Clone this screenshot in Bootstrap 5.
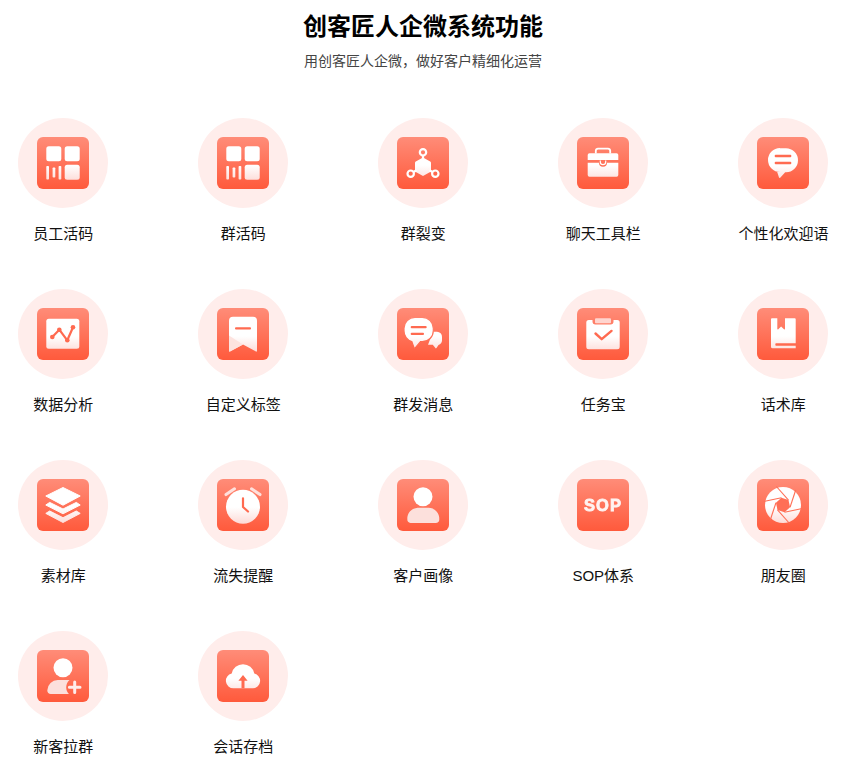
<!DOCTYPE html>
<html lang="zh-CN">
<head>
<meta charset="utf-8">
<title>创客匠人企微系统功能</title>
<link href="https://cdn.jsdelivr.net/npm/bootstrap@5.3.0/dist/css/bootstrap.min.css" rel="stylesheet">
<style>
body{font-family:"Liberation Sans","Noto Sans CJK SC",sans-serif;color:#000;background:#fff;overflow:hidden}
.page-head{padding:9px 0 0 1px}
.page-title{font-size:24px;line-height:36px;font-weight:700;margin:0 0 6px;color:#000}
.page-sub{font-size:14px;line-height:20px;color:#444;margin:0}
.feat-grid{padding:47px 0 0 18px;column-gap:90px;row-gap:45px}
.feat-item{width:90px}
.feat-disc{width:90px;height:90px;background:#ffedeb}
.feat-ico{width:52px;height:52px;filter:blur(.3px)}
.feat-label{font-size:15px;line-height:22px;margin-top:15px;margin-bottom:-1px;padding-left:.5px;white-space:nowrap;color:#111}
.defs-box{width:0;height:0}
.sop-mark{font-family:"Liberation Sans",sans-serif;font-weight:700;font-size:16.5px;letter-spacing:1px}
</style>
</head>
<body>
<svg class="d-block defs-box" aria-hidden="true">
<defs>
<linearGradient id="sq" gradientUnits="userSpaceOnUse" x1="0" y1="0" x2="0" y2="52"><stop offset="0" stop-color="#ff8c78"/><stop offset="1" stop-color="#ff5a3c"/></linearGradient>
<linearGradient id="wh" gradientUnits="userSpaceOnUse" x1="0" y1="9" x2="0" y2="44"><stop offset="0" stop-color="#fff"/><stop offset=".55" stop-color="#fff"/><stop offset="1" stop-color="#fddcd8"/></linearGradient>
</defs>
</svg>
<div class="page-head text-center">
<h1 class="page-title">创客匠人企微系统功能</h1>
<p class="page-sub">用创客匠人企微，做好客户精细化运营</p>
</div>
<div class="feat-grid d-flex flex-wrap">

<div class="feat-item text-center">
<div class="feat-disc rounded-circle d-flex align-items-center justify-content-center">
<svg class="feat-ico" viewBox="0 0 52 52"><rect width="52" height="52" rx="6" fill="url(#sq)"/><g fill="url(#wh)"><rect x="9.300" y="9.300" width="15" height="15" rx="2.500"/><rect x="27.700" y="9.300" width="15" height="15" rx="2.500"/><rect x="27.700" y="27.700" width="15" height="15" rx="2.500"/><rect x="9.300" y="29" width="2.700" height="13.500" rx=".8"/><rect x="15.600" y="30.500" width="2.700" height="10" rx=".8"/><rect x="21.600" y="29" width="2.700" height="13.500" rx=".8"/></g></svg>
</div>
<div class="feat-label">员工活码</div>
</div>

<div class="feat-item text-center">
<div class="feat-disc rounded-circle d-flex align-items-center justify-content-center">
<svg class="feat-ico" viewBox="0 0 52 52"><rect width="52" height="52" rx="6" fill="url(#sq)"/><g fill="url(#wh)"><rect x="9.300" y="9.300" width="15" height="15" rx="2.500"/><rect x="27.700" y="9.300" width="15" height="15" rx="2.500"/><rect x="27.700" y="27.700" width="15" height="15" rx="2.500"/><rect x="9.300" y="29" width="2.700" height="13.500" rx=".8"/><rect x="15.600" y="30.500" width="2.700" height="10" rx=".8"/><rect x="21.600" y="29" width="2.700" height="13.500" rx=".8"/></g></svg>
</div>
<div class="feat-label">群活码</div>
</div>

<div class="feat-item text-center">
<div class="feat-disc rounded-circle d-flex align-items-center justify-content-center">
<svg class="feat-ico" viewBox="0 0 52 52"><rect width="52" height="52" rx="6" fill="url(#sq)"/><path d="M26 20.500l7.200 4.100a1.600 1.600 0 0 1 .8 1.400v7.600a1.600 1.600 0 0 1-.8 1.400L26 39l-7.200-3.900a1.600 1.600 0 0 1-.8-1.400V26a1.600 1.600 0 0 1 .8-1.400z" fill="url(#wh)"/><g stroke="#fff" stroke-width="2.200" fill="none"><circle cx="26" cy="15.300" r="3.200"/><circle cx="13.700" cy="36.700" r="3.200"/><circle cx="38.300" cy="36.700" r="3.200"/><path d="M26 18.500v4M16.500 35l3-1.800M35.500 35l-3-1.800"/></g></svg>
</div>
<div class="feat-label">群裂变</div>
</div>

<div class="feat-item text-center">
<div class="feat-disc rounded-circle d-flex align-items-center justify-content-center">
<svg class="feat-ico" viewBox="0 0 52 52"><rect width="52" height="52" rx="6" fill="url(#sq)"/><path d="M18.800 16.500v-2.700a2.200 2.200 0 0 1 2.200-2.200h10a2.200 2.200 0 0 1 2.200 2.200v2.700" fill="none" stroke="#fff" stroke-width="1.800"/><path d="M12.500 16.300h27a1.800 1.800 0 0 1 1.800 1.800v5H10.700v-5a1.800 1.800 0 0 1 1.800-1.800z" fill="#fff"/><path d="M10.700 25.800H22a4 4 0 0 0 8 0h11.300v12.200a1.700 1.700 0 0 1-1.700 1.700H12.400a1.700 1.700 0 0 1-1.700-1.700z" fill="url(#wh)"/><path d="M23.300 23.500v1.500a2.700 2.700 0 0 0 5.400 0v-1.500" fill="none" stroke="#fff" stroke-width="1.200"/></svg>
</div>
<div class="feat-label">聊天工具栏</div>
</div>

<div class="feat-item text-center">
<div class="feat-disc rounded-circle d-flex align-items-center justify-content-center">
<svg class="feat-ico" viewBox="0 0 52 52"><rect width="52" height="52" rx="6" fill="url(#sq)"/><path d="M23 11.300h6a12 12 0 0 1 0 24h-.8l-5 5.400c-.4.400-1 .2-1.200-.3l-1.800-5.500H23a12 12 0 0 1 0-24z" fill="url(#wh)"/><g fill="#ff6a50"><rect x="17.700" y="17.700" width="16.600" height="2.600" rx="1"/><rect x="17.700" y="24.700" width="16.600" height="2.600" rx="1"/></g></svg>
</div>
<div class="feat-label">个性化欢迎语</div>
</div>

<div class="feat-item text-center">
<div class="feat-disc rounded-circle d-flex align-items-center justify-content-center">
<svg class="feat-ico" viewBox="0 0 52 52"><rect width="52" height="52" rx="6" fill="url(#sq)"/><rect x="9.300" y="10.700" width="33" height="30" rx="2.500" fill="url(#wh)"/><path d="M15.300 29l7-7.300 8 10.600L36 19.300" fill="none" stroke="#ff6a50" stroke-width="2.200" stroke-linejoin="round"/><g fill="#ff6a50"><circle cx="15.300" cy="29" r="2.300"/><circle cx="22.300" cy="21.700" r="2.300"/><circle cx="30.300" cy="32.300" r="2.300"/><circle cx="36" cy="19.300" r="2.300"/></g></svg>
</div>
<div class="feat-label">数据分析</div>
</div>

<div class="feat-item text-center">
<div class="feat-disc rounded-circle d-flex align-items-center justify-content-center">
<svg class="feat-ico" viewBox="0 0 52 52"><rect width="52" height="52" rx="6" fill="url(#sq)"/><path d="M16 8.700h20a4 4 0 0 1 4 4v30.300c0 .6-.5.800-1 .5L26 36.500l-13 7c-.5.300-1 0-1-.5V12.700a4 4 0 0 1 4-4z" fill="url(#wh)"/><path d="M12 27.500L26 36.500l-13 7c-.5.300-1 0-1-.5z" fill="#fde3df"/><rect x="18" y="19.300" width="16" height="2.200" rx="1" fill="#ff6a50"/></svg>
</div>
<div class="feat-label">自定义标签</div>
</div>

<div class="feat-item text-center">
<div class="feat-disc rounded-circle d-flex align-items-center justify-content-center">
<svg class="feat-ico" viewBox="0 0 52 52"><rect width="52" height="52" rx="6" fill="url(#sq)"/><path d="M36 23.700h4a5 5 0 0 1 5 5.300v3.500a5 5 0 0 1-3.500 4.500l-2 3-.7.4-3-3.600H31z" fill="url(#wh)"/><path d="M18 9.300h7.300a11 11 0 0 1 11 11v2.400a11 11 0 0 1-11 11H23.500l-5.300 6.200c-.4.400-1 .3-1.200-.2l-2.200-6.100A11 11 0 0 1 7 23v-2.700a11 11 0 0 1 11-11z" fill="url(#wh)" stroke="url(#sq)" stroke-width="1.200"/><g fill="#ff6a50"><rect x="13.700" y="18" width="16" height="2.300" rx="1"/><rect x="13.700" y="24.700" width="13.300" height="2.300" rx="1"/></g></svg>
</div>
<div class="feat-label">群发消息</div>
</div>

<div class="feat-item text-center">
<div class="feat-disc rounded-circle d-flex align-items-center justify-content-center">
<svg class="feat-ico" viewBox="0 0 52 52"><rect width="52" height="52" rx="6" fill="url(#sq)"/><path d="M11.800 12h3.700v1.500a3 3 0 0 0 3 3h15a3 3 0 0 0 3-3V12h3.700a2.500 2.500 0 0 1 2.500 2.500v24.300a2.500 2.500 0 0 1-2.500 2.500H11.800a2.500 2.500 0 0 1-2.500-2.500V14.500a2.500 2.500 0 0 1 2.500-2.500z" fill="url(#wh)"/><rect x="18" y="10.300" width="16" height="5" rx="1" fill="#ffd5cf"/><path d="M18.500 25.500l6.200 5.700 9.800-8.300" fill="none" stroke="#ff6a50" stroke-width="2.400" stroke-linecap="round" stroke-linejoin="round"/></svg>
</div>
<div class="feat-label">任务宝</div>
</div>

<div class="feat-item text-center">
<div class="feat-disc rounded-circle d-flex align-items-center justify-content-center">
<svg class="feat-ico" viewBox="0 0 52 52"><rect width="52" height="52" rx="6" fill="url(#sq)"/><path d="M15 10.300h5.300v10.500c0 .6.600.8 1 .4l2.800-2.700 2.900 2.700c.4.400 1 .2 1-.4V10.300h9.700a1 1 0 0 1 1 1v24h-20a2 2 0 0 0 0 2.400h20v2.600H15.500a1.500 1.500 0 0 1-1.500-1.500v-27.500a1 1 0 0 1 1-1z" fill="url(#wh)"/></svg>
</div>
<div class="feat-label">话术库</div>
</div>

<div class="feat-item text-center">
<div class="feat-disc rounded-circle d-flex align-items-center justify-content-center">
<svg class="feat-ico" viewBox="0 0 52 52"><rect width="52" height="52" rx="6" fill="url(#sq)"/><g fill="url(#wh)" stroke="url(#wh)" stroke-width="1" stroke-linejoin="round"><path d="M8.800 17L26 8.500 43.200 17 26 26.200z"/><path d="M8.800 26l3.900-2.600L26 30l13.300-6.600 3.900 2.600L26 34.800z"/><path d="M8.800 34.400l3.900-2.400L26 38.700 39.300 32l3.900 2.400L26 43.500z"/></g></svg>
</div>
<div class="feat-label">素材库</div>
</div>

<div class="feat-item text-center">
<div class="feat-disc rounded-circle d-flex align-items-center justify-content-center">
<svg class="feat-ico" viewBox="0 0 52 52"><rect width="52" height="52" rx="6" fill="url(#sq)"/><circle cx="26" cy="27.700" r="17" fill="url(#wh)"/><path d="M9 15.600L17.500 9.800M43 15.600L34.500 9.800" stroke="#ffe0dc" stroke-width="3" stroke-linecap="round"/><path d="M26 19.300v8.700l5 4.500" fill="none" stroke="#ff6a50" stroke-width="2.200" stroke-linecap="round" stroke-linejoin="round"/></svg>
</div>
<div class="feat-label">流失提醒</div>
</div>

<div class="feat-item text-center">
<div class="feat-disc rounded-circle d-flex align-items-center justify-content-center">
<svg class="feat-ico" viewBox="0 0 52 52"><rect width="52" height="52" rx="6" fill="url(#sq)"/><circle cx="26" cy="17.700" r="9.500" fill="#fff"/><path d="M20.500 28.700h11a11 11 0 0 1 10.800 11.500 3.800 3.800 0 0 1-3.800 3.800h-25a3.800 3.800 0 0 1-3.200-3.800A11 11 0 0 1 20.500 28.700z" fill="#fce0dc"/></svg>
</div>
<div class="feat-label">客户画像</div>
</div>

<div class="feat-item text-center">
<div class="feat-disc rounded-circle d-flex align-items-center justify-content-center">
<svg class="feat-ico" viewBox="0 0 52 52"><rect width="52" height="52" rx="6" fill="url(#sq)"/><text class="sop-mark" x="26" y="32" text-anchor="middle" fill="#fff3f1" stroke="#fff3f1" stroke-width=".8">SOP</text></svg>
</div>
<div class="feat-label">SOP体系</div>
</div>

<div class="feat-item text-center">
<div class="feat-disc rounded-circle d-flex align-items-center justify-content-center">
<svg class="feat-ico" viewBox="0 0 52 52"><rect width="52" height="52" rx="6" fill="url(#sq)"/><circle cx="26" cy="26" r="18" fill="url(#wh)"/><g transform="translate(26 26)"><path d="M5.500-4.950 7.040 2.290 1.540 7.240-5.500 4.950-7.040-2.290-1.540-7.240z" fill="#ff6f56"/><g stroke="#ff6f56" stroke-width="1.100"><path d="M-6.600-18.500 5.500-4.950"/><path d="M-6.600-18.500 5.500-4.950" transform="rotate(60)"/><path d="M-6.600-18.500 5.500-4.950" transform="rotate(120)"/><path d="M-6.600-18.500 5.500-4.950" transform="rotate(180)"/><path d="M-6.600-18.500 5.500-4.950" transform="rotate(240)"/><path d="M-6.600-18.500 5.500-4.950" transform="rotate(300)"/></g></g></svg>
</div>
<div class="feat-label">朋友圈</div>
</div>

<div class="feat-item text-center">
<div class="feat-disc rounded-circle d-flex align-items-center justify-content-center">
<svg class="feat-ico" viewBox="0 0 52 52"><rect width="52" height="52" rx="6" fill="url(#sq)"/><circle cx="26" cy="17.700" r="9.500" fill="#fff"/><path d="M21 30h11.500a10 10 0 0 0-3.300 7.300c0 2.600 1 5 2.700 6.700H13.800a3.500 3.500 0 0 1-3.500-3.700A10.500 10.500 0 0 1 21 30z" fill="#fce0dc"/><path d="M37.700 32v10.600M32.400 37.300h10.600" stroke="#ffecea" stroke-width="3" stroke-linecap="round"/></svg>
</div>
<div class="feat-label">新客拉群</div>
</div>

<div class="feat-item text-center">
<div class="feat-disc rounded-circle d-flex align-items-center justify-content-center">
<svg class="feat-ico" viewBox="0 0 52 52"><rect width="52" height="52" rx="6" fill="url(#sq)"/><path d="M16.500 38.300A7.500 7.500 0 0 1 14.700 23.500 11.500 11.500 0 0 1 37.300 23.500 7.500 7.500 0 0 1 36 38.300z" fill="url(#wh)"/><path d="M26 25l4.600 5.800h-3.100v7.500h-3v-7.500h-3.100z" fill="#ff6a50"/></svg>
</div>
<div class="feat-label">会话存档</div>
</div>

</div>
<script src="https://cdn.jsdelivr.net/npm/bootstrap@5.3.0/dist/js/bootstrap.bundle.min.js"></script>
</body>
</html>
